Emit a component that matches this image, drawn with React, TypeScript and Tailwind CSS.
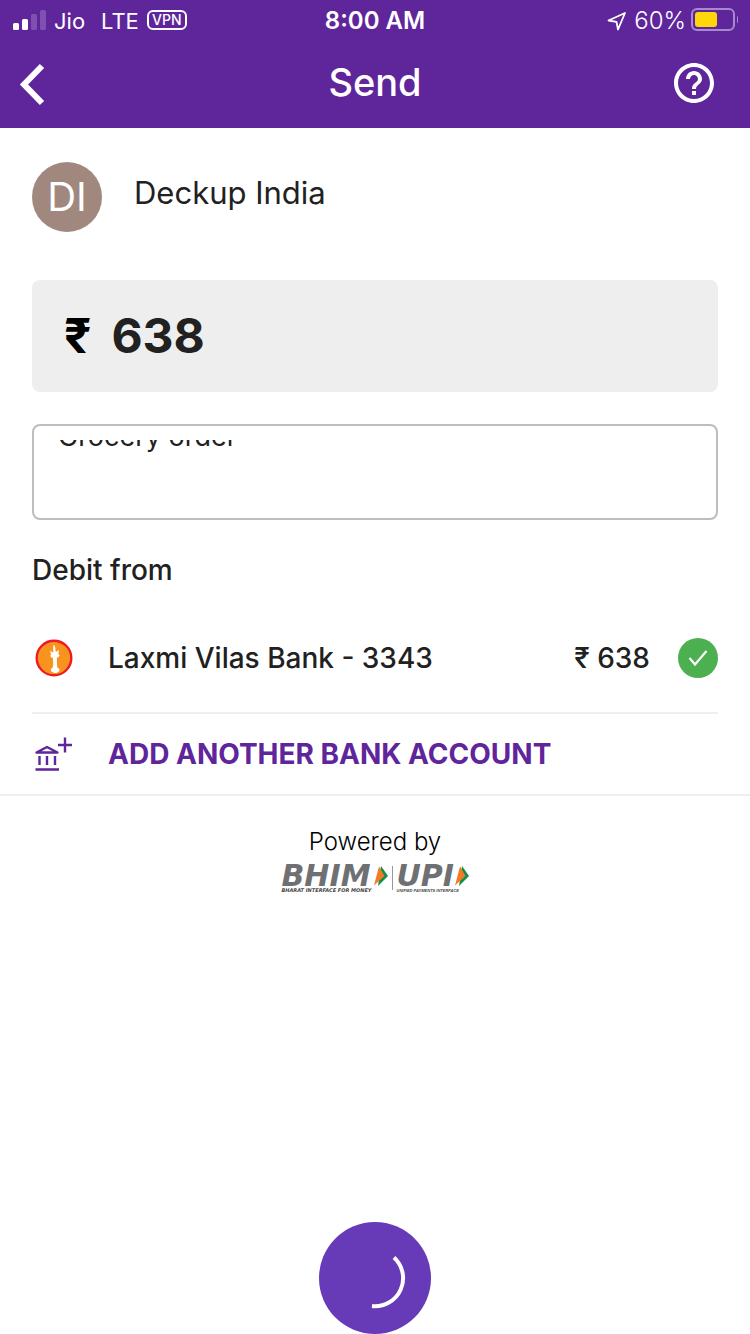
import { useLayoutEffect, useRef } from "react";

function StatusBar() {
  return (
    <div className="grid h-10 grid-cols-3 items-center px-3 pt-0.5 text-2xl leading-none">
      <div className="flex items-center gap-2">
        <svg viewBox="0 0 34 22" className="mb-0.5 h-[22px] w-[34px]" fill="#fff" aria-label="Signal strength">
          <rect x="1" y="14" width="6" height="7" rx="1.5" />
          <rect x="10" y="10" width="6" height="11" rx="1.5" />
          <rect x="19" y="5" width="6" height="16" rx="1.5" opacity=".2" />
          <rect x="28" y="1" width="6" height="20" rx="1.5" opacity=".2" />
        </svg>
        <div className="flex items-center gap-2 text-[22px]">
          <span className="mr-2">Jio</span>
          <span>LTE</span>
          <span className="mb-0.5 flex h-5 w-10 items-center justify-center rounded-md border-2 border-white text-sm font-medium leading-none">
            VPN
          </span>
        </div>
      </div>
      <div className="text-center font-semibold">8:00 AM</div>
      <div className="flex items-center justify-end">
        <svg viewBox="0 0 20 20" className="mr-2 h-5 w-5 shrink-0" fill="none" stroke="#fff" strokeWidth="1.8" strokeLinejoin="round" aria-label="Location">
          <path d="M19 2 2.500 9.500 10.500 10.800 12 18.500Z" />
        </svg>
        <span className="mr-1 font-light">60%</span>
        <svg viewBox="0 0 48 24" className="mb-0.5 h-6 w-12 shrink-0" aria-label="Battery">
          <rect x="2" y="1" width="42" height="21" rx="5" fill="none" stroke="#a889d0" strokeWidth="2" />
          <rect x="5" y="4" width="22" height="15" rx="3" fill="#ffd60a" />
          <path d="M47 8c2 1 2 6 0 7Z" fill="#a889d0" />
        </svg>
      </div>
    </div>
  );
}

function Header() {
  return (
    <header className="bg-[#5f259b] text-white">
      <StatusBar />
      <div className="flex h-[88px] items-center justify-between px-4 pb-0.5">
        <button aria-label="Back" className="flex h-12 w-16 items-center">
          <svg viewBox="0 0 32 44" className="mt-0.5 h-11 w-8" fill="none" stroke="#fff" strokeWidth="6">
            <path d="M26 4 8 22.500 26 41" />
          </svg>
        </button>
        <h1 className="pb-0.5 text-[38px] font-medium leading-none">Send</h1>
        <button aria-label="Help" className="flex h-12 w-16 items-center justify-end">
          <svg viewBox="2 2 20 20" className="mr-5 h-10 w-10 shrink-0" fill="#fff">
            <path d="M11 18h2v-2h-2v2zm1-16C6.480 2 2 6.480 2 12s4.480 10 10 10 10-4.480 10-10S17.520 2 12 2zm0 18c-4.410 0-8-3.590-8-8s3.590-8 8-8 8 3.590 8 8-3.590 8-8 8zm0-14c-2.210 0-4 1.790-4 4h2c0-1.100.9-2 2-2s2 .9 2 2c0 2-3 1.750-3 5h2c0-2.250 3-2.500 3-5 0-2.210-1.790-4-4-4z" />
          </svg>
        </button>
      </div>
    </header>
  );
}

function NoteField() {
  const field = useRef<HTMLTextAreaElement>(null);
  useLayoutEffect(() => {
    if (field.current) field.current.scrollTop = 21;
  }, []);
  return (
    <div className="mt-8 h-24 rounded-lg border-2 border-[#bdbdbd] px-6 py-3.5">
      <textarea
        ref={field}
        aria-label="Message"
        defaultValue="Grocery order"
        className="block h-16 w-full resize-none overflow-hidden pb-16 text-[27px] leading-9 outline-none"
      />
    </div>
  );
}

function BankLogo() {
  return (
    <svg viewBox="0 0 38 38" className="h-[38px] w-[38px]" aria-hidden="true">
      <circle cx="19" cy="19" r="17.300" fill="#f7931e" stroke="#ed1c24" strokeWidth="2.400" />
      <path
        fill="#fff"
        d="M18.500 5.500l1.500 2 .6 3-.4 1.500 2 .8.900-2 .9 1.800-.8 1.900 1.500 2-2.200 2.500-.5-1.800-.1 5 .2 4 .2 2 2.300 2-.6 2.300-2.700 1.500-1.800 0-3.200-1.500-.5-2.300 2-2 .4-3-.2-4.500-.3-3-.5 1.500-2-2.300 1-1.800-1-2 .6-1.600 1.300 2 1.300-.5-.2-2.500Z"
      />
    </svg>
  );
}

function AddBankIcon() {
  return (
    <svg viewBox="0 0 40 36" className="h-9 w-10" fill="none" stroke="#5f259b" strokeWidth="2.400" aria-hidden="true">
      <path strokeLinejoin="round" d="M4.500 16.500 15 11 25.500 16.500Z" />
      <path d="M7.500 20v9M15 20v9M23 20v9M3.500 33.500h23.500M26 9h15M33 1.500v15" />
    </svg>
  );
}

function LogoArrow() {
  return (
    <svg viewBox="0 0 14 20" className="h-5 w-3.5" aria-hidden="true">
      <path d="M7 0 14 10 4 20Z" fill="#0f8f4b" />
      <path d="M5 .500 10.500 10 0 19.500Z" fill="#f47a24" />
    </svg>
  );
}

function PaymentLogos() {
  return (
    <div className="mt-1.5 flex justify-center text-[#6f7073]">
      <div className="flex w-[106px] flex-col">
        <div className="flex items-center justify-between font-['DejaVu_Sans'] text-[30px] font-bold italic leading-5">
          <span>BHIM</span>
          <LogoArrow />
        </div>
        <span className="mt-0.5 whitespace-nowrap font-['DejaVu_Sans'] text-[5px] font-bold italic leading-[5px] text-[#444]">
          BHARAT INTERFACE FOR MONEY
        </span>
      </div>
      <div className="mx-1 h-6 w-px bg-[#999]" />
      <div className="flex w-[72px] flex-col">
        <div className="flex items-center justify-between font-['DejaVu_Sans'] text-[30px] font-bold italic leading-5">
          <span>UPI</span>
          <LogoArrow />
        </div>
        <span className="mt-0.5 whitespace-nowrap font-['Liberation_Sans_Narrow','Liberation_Sans'] text-[4px] font-bold italic leading-[5px] text-[#444]">
          UNIFIED PAYMENTS INTERFACE
        </span>
      </div>
    </div>
  );
}

export default function App() {
  return (
    <div className="flex min-h-screen flex-col bg-white font-['Inter','Liberation_Sans',sans-serif] text-[#212121]">
      <Header />
      <main className="flex grow flex-col">
        <div className="px-8 pt-[34px]">
          <div className="flex gap-8">
            <div className="flex h-[70px] w-[70px] items-center justify-center rounded-full bg-[#a1887f] text-[40px] leading-none text-white">
              DI
            </div>
            <div className="pt-[11px] text-[31px] leading-10">Deckup India</div>
          </div>

          <div className="mt-12 flex h-28 items-center gap-5 rounded-lg bg-[#eee] px-8 text-5xl font-bold">
            <span className="text-black">₹</span>
            <span>638</span>
          </div>

          <NoteField />

          <h2 className="mt-8 text-[28px] font-medium leading-9">Debit from</h2>

          <label className="mt-4 flex h-[110px] items-center border-b-2 border-[#eee] text-[28px] font-medium">
            <span className="ml-[3px] w-[73px]">
              <BankLogo />
            </span>
            <span className="grow">Laxmi Vilas Bank - 3343</span>
            <span>₹ 638</span>
            <span className="relative ml-7 h-10 w-10">
              <input type="radio" name="account" defaultChecked className="h-10 w-10 appearance-none rounded-full bg-[#4caf50]" />
              <svg viewBox="0 0 40 40" className="pointer-events-none absolute inset-0" fill="none" stroke="#fff" strokeWidth="2.200" aria-hidden="true">
                <path d="M11.500 20 17 26.500 28.500 13" />
              </svg>
            </span>
          </label>
        </div>

        <div className="border-b-2 border-[#eee] px-8">
          <button className="flex h-20 w-full items-center text-left text-[28px] font-bold text-[#5f259b]">
            <span className="w-[76px]">
              <AddBankIcon />
            </span>
            ADD ANOTHER BANK ACCOUNT
          </button>
        </div>

        <div className="pt-7">
          <p className="text-center text-2xl font-light leading-9 text-black">Powered by</p>
          <PaymentLogos />
        </div>

        <button aria-label="Sending payment" className="mx-auto mt-auto h-28 w-28 rounded-full bg-[#673ab7]">
          <svg viewBox="0 0 112 112" className="h-28 w-28" fill="none" stroke="#fff" strokeWidth="4">
            <path d="M75 35.500A28 28 0 0 1 53 84" />
          </svg>
        </button>
      </main>
    </div>
  );
}
